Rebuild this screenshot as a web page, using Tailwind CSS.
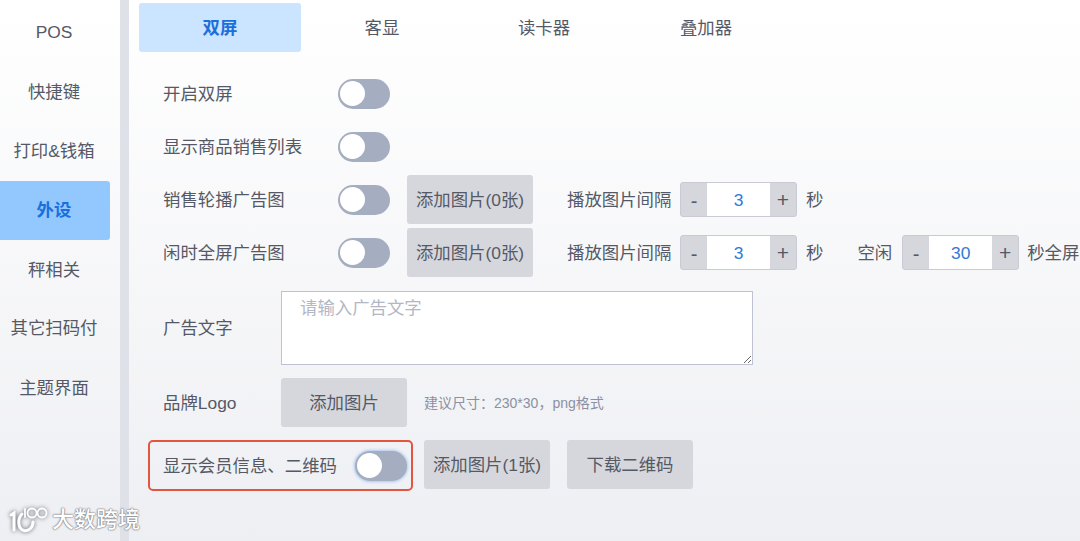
<!DOCTYPE html>
<html lang="zh-CN">
<head>
<meta charset="utf-8">
<script src="https://cdn.jsdelivr.net/npm/@tailwindcss/browser@4"></script>
</head>
<body class="overflow-hidden">
<div class="relative flex h-[541px] w-[1080px] overflow-hidden bg-gradient-to-b from-white to-[#eeeff3] font-['Liberation_Sans','Noto_Sans_CJK_SC',sans-serif] text-[17.4px] text-[#555966]">
  <nav class="flex w-[120px] shrink-0 flex-col items-start pt-[3px]">
    <div class="flex h-[59px] w-[108px] items-center justify-center">POS</div>
    <div class="flex h-[59px] w-[108px] items-center justify-center pt-[2px]">快捷键</div>
    <div class="flex h-[59px] w-[108px] items-center justify-center whitespace-nowrap pt-[2px]">打印&amp;钱箱</div>
    <div class="mt-[1px] flex h-[59px] w-[110px] items-center justify-center rounded-r-[3px] bg-[#93c8ff] pr-[2px] font-bold text-[#1a6fdc]">外设</div>
    <div class="flex h-[59px] w-[108px] items-center justify-center pt-[1px]">秤相关</div>
    <div class="flex h-[59px] w-[108px] items-center justify-center whitespace-nowrap">其它扫码付</div>
    <div class="flex h-[59px] w-[108px] items-center justify-center pt-[1px]">主题界面</div>
  </nav>
  <div class="w-[9px] shrink-0 bg-[#dfe1e8]"></div>
  <main class="min-w-0 flex-1 pl-[10px] pt-[3px]">
    <div class="flex h-[49px]">
      <div class="flex w-[162px] items-center justify-center rounded-[3px] bg-[#cbe4ff] pt-[2px] font-bold text-[#1a6fdc]">双屏</div>
      <div class="flex w-[162px] items-center justify-center pt-[2px]">客显</div>
      <div class="flex w-[162px] items-center justify-center pt-[2px]">读卡器</div>
      <div class="flex w-[162px] items-center justify-center pt-[2px]">叠加器</div>
    </div>
    <div class="mt-[15px] flex flex-col pl-[24px]">
      <div class="flex h-[53px] items-center">
        <span class="w-[175px] pt-[2px]">开启双屏</span>
        <span class="flex h-[30px] w-[52px] items-center rounded-full bg-[#a5adc0] pl-[2px]"><span class="h-[25px] w-[25px] rounded-full bg-white"></span></span>
      </div>
      <div class="flex h-[53px] items-center">
        <span class="w-[175px] pt-[2px]">显示商品销售列表</span>
        <span class="flex h-[30px] w-[52px] items-center rounded-full bg-[#a5adc0] pl-[2px]"><span class="h-[25px] w-[25px] rounded-full bg-white"></span></span>
      </div>
      <div class="flex h-[53px] items-center whitespace-nowrap">
        <span class="w-[175px] pt-[2px]">销售轮播广告图</span>
        <span class="flex h-[30px] w-[52px] items-center rounded-full bg-[#a5adc0] pl-[2px]"><span class="h-[25px] w-[25px] rounded-full bg-white"></span></span>
        <button class="ml-[17px] h-[49px] w-[126px] rounded-[3px] bg-[#d6d7dc] pt-[2px]">添加图片(0张)</button>
        <span class="ml-[34px] w-[113px] pt-[2px]">播放图片间隔</span>
        <div class="flex h-[35px] w-[117px] items-stretch overflow-hidden rounded-[3px] border border-[#c8cbd6] bg-[#d6d7dc]">
          <span class="flex w-[26px] items-center justify-center pt-[2px] text-[20px]">-</span>
          <span class="flex w-[63px] items-center justify-center bg-white pt-[2px] text-[#2f7ad6]">3</span>
          <span class="flex flex-1 items-center justify-center text-[21px]">+</span>
        </div>
        <span class="ml-[9px] pt-[2px]">秒</span>
      </div>
      <div class="flex h-[53px] items-center whitespace-nowrap">
        <span class="w-[175px] shrink-0 pt-[2px]">闲时全屏广告图</span>
        <span class="flex h-[30px] w-[52px] shrink-0 items-center rounded-full bg-[#a5adc0] pl-[2px]"><span class="h-[25px] w-[25px] rounded-full bg-white"></span></span>
        <button class="ml-[17px] h-[49px] w-[126px] shrink-0 rounded-[3px] bg-[#d6d7dc] pt-[2px]">添加图片(0张)</button>
        <span class="ml-[34px] w-[113px] shrink-0 pt-[2px]">播放图片间隔</span>
        <div class="flex h-[35px] w-[117px] shrink-0 items-stretch overflow-hidden rounded-[3px] border border-[#c8cbd6] bg-[#d6d7dc]">
          <span class="flex w-[26px] items-center justify-center pt-[2px] text-[20px]">-</span>
          <span class="flex w-[63px] items-center justify-center bg-white pt-[2px] text-[#2f7ad6]">3</span>
          <span class="flex flex-1 items-center justify-center text-[21px]">+</span>
        </div>
        <span class="ml-[9px] shrink-0 pt-[2px]">秒</span>
        <span class="ml-[34px] shrink-0 pt-[2px]">空闲</span>
        <div class="ml-[10px] flex h-[35px] w-[117px] shrink-0 items-stretch overflow-hidden rounded-[3px] border border-[#c8cbd6] bg-[#d6d7dc]">
          <span class="flex w-[26px] items-center justify-center pt-[2px] text-[20px]">-</span>
          <span class="flex w-[63px] items-center justify-center bg-white pt-[2px] text-[#2f7ad6]">30</span>
          <span class="flex flex-1 items-center justify-center text-[21px]">+</span>
        </div>
        <span class="ml-[8px] shrink-0 pt-[2px]">秒全屏</span>
      </div>
      <div class="mt-[12px] flex h-[74px] items-center">
        <span class="w-[118px] shrink-0">广告文字</span>
        <textarea placeholder="请输入广告文字" class="h-[74px] w-[472px] border border-[#bfc2d2] bg-white px-[18px] py-[3px] placeholder:text-[#b3b7c5]"></textarea>
      </div>
      <div class="mt-[13px] flex h-[49px] items-center">
        <span class="w-[118px] shrink-0 pt-[2px]">品牌Logo</span>
        <button class="h-[49px] w-[126px] rounded-[3px] bg-[#d6d7dc] pt-[2px]">添加图片</button>
        <span class="ml-[17px] pt-[1px] font-['Liberation_Sans','Noto_Sans_CJK_TC',sans-serif] text-[14px] text-[#8b90a2]">建议尺寸：230*30，png格式</span>
      </div>
    </div>
    <div class="ml-[9px] mt-[13px] flex h-[51px] items-center">
      <div class="flex h-[51px] w-[265px] items-center rounded-[5px] border-2 border-[#e2553f] pl-[13px]">
        <span class="w-[192px] shrink-0 pt-[2px]">显示会员信息、二维码</span>
        <span class="flex h-[30px] w-[52px] shrink-0 items-center rounded-full bg-[#a5adc0] pl-[2px] shadow-[0_0_3px_1px_#a9c8f0]"><span class="h-[25px] w-[25px] rounded-full bg-white"></span></span>
      </div>
      <button class="ml-[11px] h-[49px] w-[126px] self-start rounded-[3px] bg-[#d6d7dc] pt-[2px]">添加图片(1张)</button>
      <button class="ml-[17px] h-[49px] w-[126px] self-start rounded-[3px] bg-[#d6d7dc] pt-[2px]">下载二维码</button>
    </div>
  </main>
  <div class="absolute left-[9px] top-[507px] flex items-center gap-[3px]">
    <svg width="40" height="26" viewBox="0 0 40 26" fill="none" stroke="#ffffff" stroke-linecap="round" class="drop-shadow-[0_0_2px_#5f6168]">
      <path d="M2 8 L5 6 V23" stroke-width="3"/>
      <path d="M13 7 C8 12 9 22 15 23.500 C20 24.500 24 20 24 15" stroke-width="3"/>
      <path d="M16 2 V10" stroke-width="1.800"/>
      <circle cx="23" cy="6" r="4.500" stroke-width="1.800"/>
      <circle cx="33" cy="6" r="4.500" stroke-width="1.800"/>
    </svg>
    <span class="text-[22px] font-medium leading-none text-white [text-shadow:0_0_2px_#5f6168,0_0_1px_#5f6168]">大数跨境</span>
  </div>
</div>
</body>
</html>
